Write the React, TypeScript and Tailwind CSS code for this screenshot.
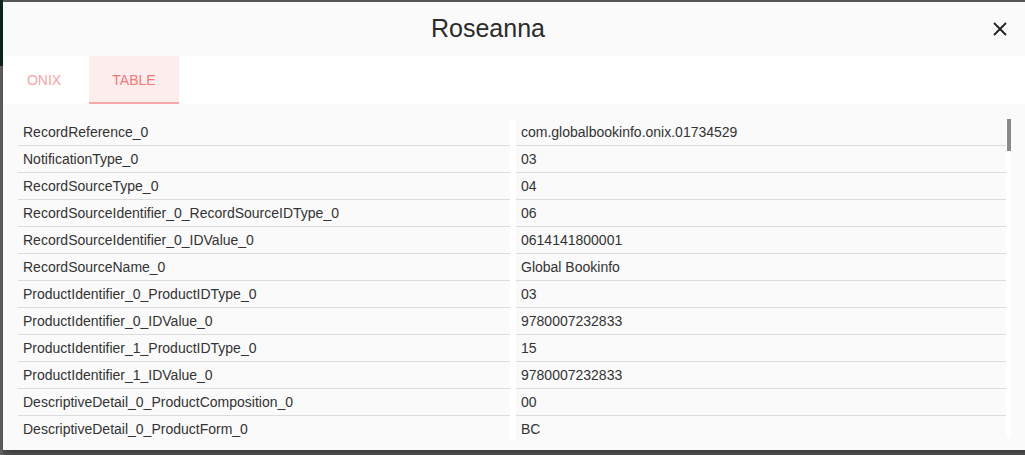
import { X } from "lucide-react"

const rows: [string, string][] = [
  ["RecordReference_0", "com.globalbookinfo.onix.01734529"],
  ["NotificationType_0", "03"],
  ["RecordSourceType_0", "04"],
  ["RecordSourceIdentifier_0_RecordSourceIDType_0", "06"],
  ["RecordSourceIdentifier_0_IDValue_0", "0614141800001"],
  ["RecordSourceName_0", "Global Bookinfo"],
  ["ProductIdentifier_0_ProductIDType_0", "03"],
  ["ProductIdentifier_0_IDValue_0", "9780007232833"],
  ["ProductIdentifier_1_ProductIDType_0", "15"],
  ["ProductIdentifier_1_IDValue_0", "9780007232833"],
  ["DescriptiveDetail_0_ProductComposition_0", "00"],
  ["DescriptiveDetail_0_ProductForm_0", "BC"],
]

export default function App() {
  return (
    <div className="w-[1025px] h-[455px] overflow-hidden bg-[#5c5c5c] flex font-['Liberation_Sans',Arial,sans-serif]">
      {/* dimmed page behind the dialog */}
      <div className="w-[3px] shrink-0 flex flex-col">
        <div className="h-[66px] bg-[#0c2a22]" />
        <div className="flex-1 bg-[#6a6a6a]" />
      </div>

      <div className="flex-1 pt-[2px] pb-[4px] flex flex-col">
        <div className="w-[1030px] h-[448px] bg-[#fafafa] flex flex-col overflow-hidden shadow-[0_4px_10px_rgba(0,0,0,0.4)]">
          {/* Header */}
          <div className="h-[54px] shrink-0 flex items-center">
            <h2 className="flex-1 text-center text-[25px] text-[#2b2b2b]">Roseanna</h2>
            <button className="w-[60px] h-full flex items-center justify-start pl-[16px] text-[#222]">
              <X className="w-[22px] h-[22px]" strokeWidth={2} />
            </button>
          </div>

          {/* Tabs */}
          <div className="h-[48px] shrink-0 bg-white flex">
            <button className="w-[86px] h-full flex items-center justify-center pr-[4px] text-[14px] text-[#f6a3a3]">ONIX</button>
            <button className="w-[90px] h-full flex items-center justify-center text-[14px] text-[#f07a7a] bg-[#fdeded] border-b-2 border-[#f6a8a8] pt-[2px]">
              TABLE
            </button>
          </div>

          {/* Body */}
          <div className="flex-1 min-h-0 flex pt-[14px] pb-[10px] pl-[15px]">
            <div className="flex flex-col w-[988px] pt-[1px] overflow-hidden">
              {rows.map(([k, v]) => (
                <div key={k} className="flex h-[27px] shrink-0 text-[14px] text-[#333]">
                  <div className="w-[492px] border-b border-[#dcdcdc] pl-[5px] pt-[1px] flex items-center">{k}</div>
                  <div className="w-[6px] bg-white" />
                  <div className="w-[490px] border-b border-[#dcdcdc] pl-[5px] pt-[1px] flex items-center">{v}</div>
                </div>
              ))}
            </div>
            <div className="w-[5px] mt-[1px] mb-[2px] bg-white flex flex-col">
              <div className="h-[32px] bg-[#8a8a8a] ml-[1px]" />
            </div>
          </div>
        </div>
      </div>
    </div>
  )
}
